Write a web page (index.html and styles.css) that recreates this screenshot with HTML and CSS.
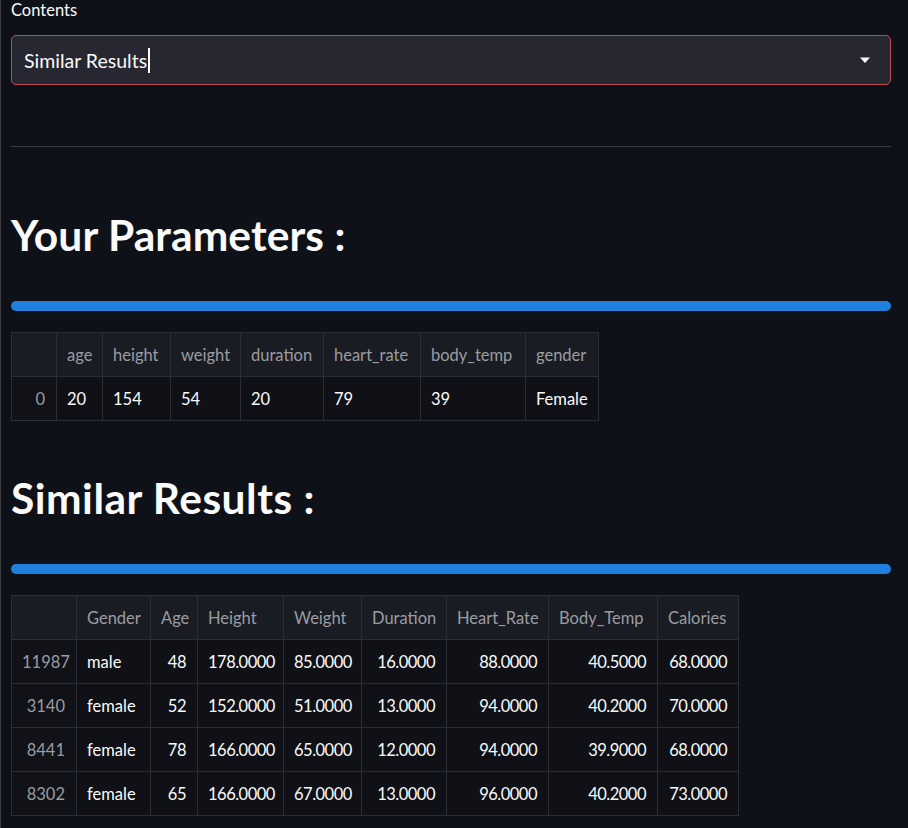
FILE: index.html
```html
<!DOCTYPE html>
<html lang="en">
<head>
<meta charset="utf-8">
<title>Similar Results</title>
<link rel="stylesheet" href="styles.css">
</head>
<body>
<main class="page">
  <label class="field-label">Contents</label>
  <div class="select">
    <span class="select-value">Similar Results<span class="caret"></span></span>
    <svg class="select-arrow" width="12" height="8" viewBox="0 0 12 8"><path d="M1 1.5h10L6 7z" fill="#fafafa"/></svg>
  </div>
  <hr class="divider">

  <h2 class="heading">Your Parameters :</h2>
  <div class="bar"></div>
  <table class="df df-params">
    <thead>
      <tr><th></th><th>age</th><th>height</th><th>weight</th><th>duration</th><th>heart_rate</th><th>body_temp</th><th>gender</th></tr>
    </thead>
    <tbody>
      <tr><th>0</th><td>20</td><td>154</td><td>54</td><td>20</td><td>79</td><td>39</td><td>Female</td></tr>
    </tbody>
  </table>

  <h2 class="heading heading-2">Similar Results :</h2>
  <div class="bar"></div>
  <table class="df df-results">
    <thead>
      <tr><th></th><th>Gender</th><th>Age</th><th>Height</th><th>Weight</th><th>Duration</th><th>Heart_Rate</th><th>Body_Temp</th><th>Calories</th></tr>
    </thead>
    <tbody>
      <tr><th>11987</th><td class="l">male</td><td>48</td><td>178.0000</td><td>85.0000</td><td>16.0000</td><td>88.0000</td><td>40.5000</td><td>68.0000</td></tr>
      <tr><th>3140</th><td class="l">female</td><td>52</td><td>152.0000</td><td>51.0000</td><td>13.0000</td><td>94.0000</td><td>40.2000</td><td>70.0000</td></tr>
      <tr><th>8441</th><td class="l">female</td><td>78</td><td>166.0000</td><td>65.0000</td><td>12.0000</td><td>94.0000</td><td>39.9000</td><td>68.0000</td></tr>
      <tr><th>8302</th><td class="l">female</td><td>65</td><td>166.0000</td><td>67.0000</td><td>13.0000</td><td>96.0000</td><td>40.2000</td><td>73.0000</td></tr>
    </tbody>
  </table>
</main>
</body>
</html>
```

FILE: styles.css
```css
html, body {
  margin: 0;
  padding: 0;
  background: #0e1117;
  height: 100%;
}
body {
  border-left: 1px solid #3a3c42;
  color: #fafafa;
  font-family: Lato, "Noto Sans", sans-serif;
  overflow: hidden;
}
.page {
  display: flex;
  flex-direction: column;
  align-items: flex-start;
  width: 880px;
  padding-left: 10px;
}
.field-label {
  font-size: 16.5px;
  line-height: 20px;
  height: 35px;
}
.select {
  box-sizing: border-box;
  width: 880px;
  height: 50px;
  background: #262730;
  border: 1px solid #c04a52;
  border-radius: 5px;
  display: flex;
  align-items: center;
  justify-content: space-between;
  padding: 0 19px 0 12px;
}
.select-value {
  font-size: 19.5px;
  display: flex;
  align-items: center;
}
.caret {
  display: inline-block;
  width: 1.5px;
  height: 25px;
  background: #fafafa;
  margin-left: 1px;
}
.select-arrow {
  display: block;
}
.divider {
  width: 880px;
  margin: 61px 0 0;
  border: 0;
  height: 1px;
  background: #3a3d44;
}
.heading {
  font-size: 42.5px;
  font-weight: 700;
  line-height: 52px;
  margin: 62px 0 0;
  letter-spacing: 0.1px;
}
.heading-2 {
  margin-top: 51px;
  letter-spacing: 0.5px;
}
.bar {
  width: 880px;
  height: 10px;
  border-radius: 5px;
  background: #1f80de;
  margin-top: 40px;
}
.df {
  border-collapse: collapse;
  table-layout: fixed;
  margin-top: 21px;
  font-size: 16.5px;
  border: 1px solid #2c2e36;
}
.df-params { width: 588px; }
.df-results { width: 728px; }
.df th, .df td {
  box-sizing: border-box;
  height: 44px;
  padding: 0 11px 0 10px;
  border: 1px solid #2c2e36;
  white-space: nowrap;
  font-weight: 400;
  overflow: visible;
}
.df thead th {
  background: #1a1c23;
  color: #9a9ca1;
  text-align: left;
}
.df tbody th {
  background: #101218;
  color: #9a9ca1;
  text-align: right;
}
.df tbody td {
  background: #0f1117;
  color: #fafafa;
}
.df-params tbody td {
  text-align: left;
}
.df-params th:nth-child(1) { width: 45px; }
.df-params th:nth-child(2) { width: 46px; }
.df-params th:nth-child(3) { width: 68px; }
.df-params th:nth-child(4) { width: 70px; }
.df-params th:nth-child(5) { width: 83px; }
.df-params th:nth-child(6) { width: 97px; }
.df-params th:nth-child(7) { width: 105px; }
.df-params th:nth-child(8) { width: 73px; }

.df-results tbody td { text-align: right; letter-spacing: -0.5px; }
.df-results tbody td.l { text-align: left; letter-spacing: 0; }
.df-results th:nth-child(1) { width: 65px; }
.df-results th:nth-child(2) { width: 74px; }
.df-results th:nth-child(3) { width: 47px; }
.df-results th:nth-child(4) { width: 86px; }
.df-results th:nth-child(5) { width: 78px; }
.df-results th:nth-child(6) { width: 85px; }
.df-results th:nth-child(7) { width: 102px; }
.df-results th:nth-child(8) { width: 109px; }
.df-results th:nth-child(9) { width: 81px; }
```
